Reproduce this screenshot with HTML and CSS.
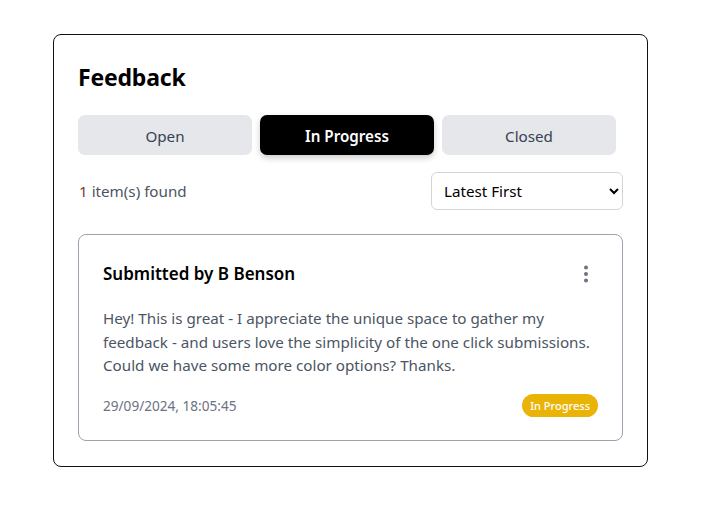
FILE: index.html
```html
<!DOCTYPE html>
<html>
<head>
<meta charset="utf-8">
<link rel="stylesheet" href="styles.css">
</head>
<body>
<div class="panel">
  <h1 class="title">Feedback</h1>
  <div class="tabs">
    <button class="tab">Open</button>
    <button class="tab active">In Progress</button>
    <button class="tab">Closed</button>
  </div>
  <div class="toolbar">
    <span class="count"><span class="num">1</span> item(s) found</span>
    <select class="sort">
      <option>Latest First</option>
      <option>Oldest First</option>
    </select>
  </div>
  <div class="card">
    <div class="card-head">
      <h2 class="author">Submitted by B Benson</h2>
      <svg class="more" width="6" height="18" viewBox="0 0 6 18"><circle cx="3" cy="2.5" r="2" fill="#6b7280"/><circle cx="3" cy="9" r="2" fill="#6b7280"/><circle cx="3" cy="15.5" r="2" fill="#6b7280"/></svg>
    </div>
    <p class="body">Hey! This is great - I appreciate the unique space to gather my feedback - and users love the simplicity of the one click submissions. Could we have some more color options? Thanks.</p>
    <div class="card-foot">
      <span class="date">29/09/2024, 18:05:45</span>
      <span class="badge">In Progress</span>
    </div>
  </div>
</div>
</body>
</html>
```
FILE: styles.css
```css
* { box-sizing: border-box; }
html, body { margin: 0; background: #fff; }
body {
  font-family: "Noto Sans", "Open Sans", sans-serif;
  padding: 34px 0 0 53px;
}
.panel {
  width: 595px;
  height: 433px;
  border: 1px solid #111;
  border-radius: 8px;
  padding: 24px 24px 24px 24px;
}
.title {
  margin: 0;
  font-size: 23px;
  font-weight: 700;
  line-height: 36px;
  color: #000;
  letter-spacing: -0.2px;
}
.tabs {
  display: grid;
  grid-template-columns: repeat(3, 174px);
  gap: 8px;
  margin-top: 20px;
}
.tab {
  height: 40px;
  border: none;
  border-radius: 7px;
  background: #e5e7eb;
  color: #374151;
  font-family: inherit;
  font-size: 15.2px;
  cursor: pointer;
  padding: 2px 0 0 0;
}
.tab.active {
  background: #000;
  color: #fff;
  font-weight: 600;
  box-shadow: 0 3px 6px rgba(0,0,0,0.2);
}
.toolbar {
  display: flex;
  justify-content: space-between;
  align-items: center;
  margin-top: 17px;
}
.count {
  font-size: 15.2px;
  color: #4b5563;
  padding-left: 1px;
}
.num { color: #7a3b2e; }
.sort {
  width: 192px;
  height: 38px;
  border: 1px solid #d1d5db;
  border-radius: 6px;
  background: #fff;
  font-family: inherit;
  font-size: 15.2px;
  color: #000;
  padding: 0 8px;
}
.card {
  margin-top: 24px;
  border: 1px solid #9ca3af;
  border-radius: 8px;
  padding: 24px 24px 23px 24px;
}
.card-head {
  display: flex;
  justify-content: space-between;
  align-items: center;
  padding-top: 1px;
}
.author {
  margin: 0;
  font-size: 17px;
  font-weight: 600;
  line-height: 28px;
  color: #000;
}
.more { margin-right: 9px; }
.body {
  margin: 19px 0 0 0;
  font-size: 15.2px;
  line-height: 23.5px;
  color: #4b5563;
}
.card-foot {
  display: flex;
  justify-content: space-between;
  align-items: center;
  margin-top: 16px;
}
.date {
  font-size: 13.6px;
  color: #6b7280;
}
.badge {
  background: #eab308;
  color: #fff;
  font-size: 11px;
  font-weight: 500;
  padding: 3px 8px;
  border-radius: 999px;
  line-height: 17px;
}
```
